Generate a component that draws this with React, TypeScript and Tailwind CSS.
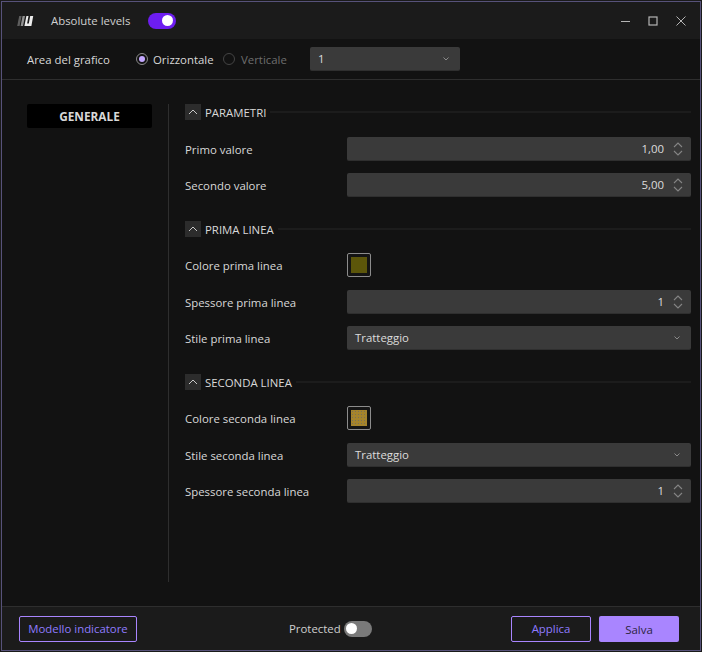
import React from 'react';

const font = "font-['Open_Sans','Noto_Sans',sans-serif]";

const Logo = () => (
  <svg width="17" height="12" viewBox="0 0 17 12" className="shrink-0">
    <polygon points="2.2,1 4.6,1 2.6,11 0.2,11" fill="#5e5e5e" />
    <polygon points="5.6,1 8,1 6,11 3.6,11" fill="#929292" />
    <path d="M9.4 1h2.1l-1.4 7.6h1.7L13.2 1h3L14.4 11H7.4z" fill="#ececec" />
  </svg>
);

const Chevron = ({ up }: { up?: boolean }) => (
  <svg width="10" height="6" viewBox="0 0 10 6" fill="none" stroke="currentColor" strokeWidth="1">
    <path d={up ? 'M1 5l4-4 4 4' : 'M1 1l4 4 4-4'} />
  </svg>
);

const Spinner = () => (
  <svg width="10" height="14" viewBox="0 0 10 14" fill="none" stroke="#858585" strokeWidth="1.1" className="shrink-0">
    <path d="M1 5l4-4 4 4M1 9l4 4 4-4" />
  </svg>
);

const SectionHeader = ({ title }: { title: string }) => (
  <div className="flex items-center h-4">
    <div className="w-4 h-4 bg-[#2c2c2c] flex items-center justify-center text-[#c8c8c8]">
      <Chevron up />
    </div>
    <span className="ml-1 pt-0.5 text-[11.4px] text-[#d8d8d8] leading-4">{title}</span>
    <div className="flex-1 h-[2px] bg-[#1c1c1c] ml-1" />
  </div>
);

const Row = ({ label, children, className }: { label: string; children: React.ReactNode; className?: string }) => (
  <div className={`flex items-center h-6 ${className ?? ''}`}>
    <div className="w-[162px] pt-px text-[11.4px] text-[#d8d8d8]">{label}</div>
    <div className="flex-1">{children}</div>
  </div>
);

const NumberInput = ({ value }: { value: string }) => (
  <div className="h-6 bg-[#3a3a3a] rounded-[2px] border-b border-[#2f2f2f] flex items-center justify-end pr-2 gap-[9px] text-[11.4px] text-[#dcdcdc]">
    <span className="pt-px">{value}</span>
    <Spinner />
  </div>
);

const SelectBox = ({ value }: { value: string }) => (
  <div className="h-6 bg-[#3a3a3a] rounded-[2px] border-b border-[#2f2f2f] flex items-center justify-between pl-2 pr-[11px] text-[11.4px] text-[#dcdcdc]">
    <span className="pt-px">{value}</span>
    <span className="text-[#8a8a8a] flex">
      <svg width="6" height="4" viewBox="0 0 6 4" fill="none" stroke="currentColor" strokeWidth="1">
        <path d="M0.5 0.5L3 3l2.5-2.5" />
      </svg>
    </span>
  </div>
);

const Swatch = ({ fill }: { fill: string }) => (
  <div className="w-6 h-6 rounded-[2px] border border-[#8c8c8c] bg-[#141414] flex items-center justify-center">
    <div className={`w-4 h-4 ${fill}`} />
  </div>
);

export default function App() {
  return (
    <div className={`w-[702px] h-[652px] bg-[#1a1a1a] p-px ${font}`}>
      <div className="w-full h-full border border-[#57527a] bg-[#121212] flex flex-col overflow-hidden">
        <div className="h-[37px] bg-[#1b1b1b] flex items-center pl-[15px] pr-[14px] shrink-0">
          <Logo />
          <span className="ml-[17px] w-[97px] text-[11.4px] text-[#d0d0d0]">Absolute levels</span>
          <div className="w-7 h-4 rounded-full bg-[#6d1df0] flex items-center justify-end pr-[3px]">
            <div className="w-[11px] h-[11px] rounded-full bg-white" />
          </div>
          <div className="ml-auto flex items-center gap-[18px] text-[#b5b5b5]">
            <svg width="9" height="10" viewBox="0 0 9 10" stroke="currentColor" strokeWidth="1"><path d="M0 5.5h9" /></svg>
            <svg width="10" height="10" viewBox="0 0 10 10" fill="none" stroke="currentColor" strokeWidth="1.2"><rect x="1" y="1" width="8" height="8" /></svg>
            <svg width="10" height="10" viewBox="0 0 10 10" fill="none" stroke="currentColor" strokeWidth="1"><path d="M0.5 0.5l9 9M9.5 0.5l-9 9" /></svg>
          </div>
        </div>

        <div className="h-[41px] border-b border-[#2e2e2e] flex items-center pl-[25px] shrink-0">
          <span className="w-[109px] pt-0.5 text-[11.4px] text-[#d8d8d8]">Area del grafico</span>
          <div className="w-3 h-3 rounded-full border border-[#8a8a8a] flex items-center justify-center">
            <div className="w-1.5 h-1.5 rounded-full bg-[#c4a8ff]" />
          </div>
          <span className="ml-[5px] w-[64px] pt-px text-[11.4px] text-[#d8d8d8]">Orizzontale</span>
          <div className="ml-[6px] w-3 h-3 rounded-full border border-[#444444]" />
          <span className="ml-[6px] w-[69px] pt-px text-[11.4px] text-[#6e6e6e]">Verticale</span>
          <div className="w-[150px]">
            <SelectBox value="1" />
          </div>
        </div>

        <div className="flex-1 flex pt-6 pl-[25px] pr-[9px] min-h-0">
          <div className="w-[125px] h-6 pt-px bg-black rounded-[2px] flex items-center justify-center text-[11.8px] font-bold text-[#d8d8d8] shrink-0">
            GENERALE
          </div>
          <div className="ml-4 w-px h-[478px] bg-[#2e2e2e] shrink-0" />
          <div className="ml-4 flex-1 flex flex-col">
            <SectionHeader title="PARAMETRI" />
            <div className="mt-[17px] flex flex-col gap-3">
              <Row label="Primo valore"><NumberInput value="1,00" /></Row>
              <Row label="Secondo valore"><NumberInput value="5,00" /></Row>
            </div>
            <div className="mt-6"><SectionHeader title="PRIMA LINEA" /></div>
            <div className="mt-4 flex flex-col gap-3">
              <Row label="Colore prima linea"><Swatch fill="bg-[#5c560a]" /></Row>
              <Row label="Spessore prima linea" className="mt-px"><NumberInput value="1" /></Row>
              <Row label="Stile prima linea"><SelectBox value="Tratteggio" /></Row>
            </div>
            <div className="mt-6"><SectionHeader title="SECONDA LINEA" /></div>
            <div className="mt-4 flex flex-col gap-3">
              <Row label="Colore seconda linea">
                <Swatch fill="bg-[#a5842c] bg-[radial-gradient(#77705a_0.6px,transparent_0.8px)] bg-[length:3px_3px]" />
              </Row>
              <Row label="Stile seconda linea" className="mt-px"><SelectBox value="Tratteggio" /></Row>
              <Row label="Spessore seconda linea"><NumberInput value="1" /></Row>
            </div>
          </div>
        </div>

        <div className="h-[44px] border-t border-[#2e2e2e] bg-[#1b1b1b] flex items-center pl-[17px] pr-[21px] shrink-0">
          <button className="w-[118px] h-[26px] pt-px rounded-[2px] border border-[#a985ff] text-[11.4px] text-[#8f7bff]">
            Modello indicatore
          </button>
          <span className="ml-[152px] w-[55px] pt-px text-[11.4px] text-[#cfcfcf]">Protected</span>
          <div className="w-7 h-4 rounded-full bg-[#7a7a7a] flex items-center pl-0.5">
            <div className="w-[11px] h-[11px] rounded-full bg-white" />
          </div>
          <button className="ml-auto w-20 h-[26px] pt-px rounded-[2px] border border-[#a985ff] text-[11.4px] text-[#8f7bff]">
            Applica
          </button>
          <button className="ml-2 w-20 h-[26px] pt-0.5 rounded-[2px] bg-[#a985ff] text-[11.4px] text-[#2c2440]">
            Salva
          </button>
        </div>
      </div>
    </div>
  );
}
